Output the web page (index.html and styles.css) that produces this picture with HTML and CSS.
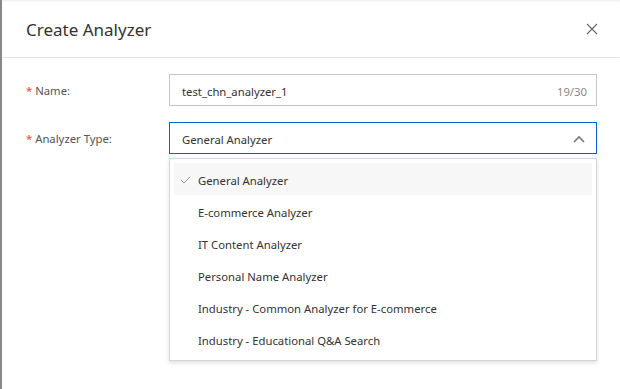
FILE: index.html
```html
<!DOCTYPE html>
<html lang="en">
<head>
  <meta charset="UTF-8">
  <title>Create Analyzer</title>
  <link rel="stylesheet" href="styles.css">
</head>
<body>
  <div class="dialog">
    <div class="dialog-header">
      <h2 class="dialog-title">Create Analyzer</h2>
      <span class="dialog-close">
        <svg width="12" height="12" viewBox="0 0 12 12"><path d="M1 1L11 11M11 1L1 11" stroke="#666" stroke-width="1.1" fill="none"/></svg>
      </span>
    </div>
    <div class="dialog-body">
      <div class="form-row">
        <label class="form-label"><span class="req">*</span> Name:</label>
        <div class="form-control input">
          <span class="input-value">test_chn_analyzer_1</span>
          <span class="input-count">19/30</span>
        </div>
      </div>
      <div class="form-row">
        <label class="form-label"><span class="req">*</span> Analyzer Type:</label>
        <div class="select-wrap">
          <div class="form-control select">
            <span class="input-value">General Analyzer</span>
            <svg width="12" height="8" viewBox="0 0 12 8"><path d="M1 7L6 2L11 7" stroke="#777" stroke-width="1.6" fill="none"/></svg>
          </div>
          <ul class="menu">
            <li class="menu-item selected">
              <svg class="check" width="11" height="8" viewBox="0 0 11 8"><path d="M1 4L4 7L10 1" stroke="#999" stroke-width="1" fill="none"/></svg>
              General Analyzer
            </li>
            <li class="menu-item">E-commerce Analyzer</li>
            <li class="menu-item">IT Content Analyzer</li>
            <li class="menu-item">Personal Name Analyzer</li>
            <li class="menu-item">Industry - Common Analyzer for E-commerce</li>
            <li class="menu-item">Industry - Educational Q&amp;A Search</li>
          </ul>
        </div>
      </div>
    </div>
  </div>
</body>
</html>
```

FILE: styles.css
```css
* { box-sizing: border-box; margin: 0; padding: 0; }
body { font-family: "Noto Sans", "Open Sans", sans-serif; background-color: #888; height: 389px; overflow: hidden; padding-left: 2px; }
.dialog { background-color: #fff; height: 100%; box-shadow: inset 0 2px 2px -1px rgba(0, 0, 0, 0.08); }
.dialog-header { height: 58px; display: flex; justify-content: space-between; align-items: center; padding: 0 24px; border-bottom: 1px solid #e6e6e6; }
.dialog-title { font-size: 17px; font-weight: normal; color: #333; padding-top: 1px; }
.dialog-close { display: flex; margin-right: -2px; }
.dialog-body { padding: 16px 23px 0 24px; }
.form-row { display: flex; align-items: flex-start; margin-bottom: 16px; }
.form-label { width: 143px; font-size: 11.3px; color: #555; line-height: 30px; padding-top: 2px; }
.req { color: #e84738; }
.form-control { flex: 1; height: 32px; border: 1px solid #c4c6cf; display: flex; align-items: center; justify-content: space-between; padding: 2px 9px 0 12px; font-size: 11.3px; color: #333; }
.input-count { color: #888; }
.select-wrap { flex: 1; }
.select { border-color: #0064c8; padding-right: 11px; }
.menu { list-style: none; margin-top: 4px; border: 1px solid #d4d6dc; box-shadow: 0 2px 4px rgba(0, 0, 0, 0.12); padding: 4px 4px 5px; background-color: #fff; }
.menu-item { position: relative; height: 32px; line-height: 29px; padding: 3px 0 0 24px; font-size: 11.3px; color: #333; }
.menu-item.selected { background-color: #f7f7f7; }
.check { position: absolute; left: 6px; top: 13px; }
```
